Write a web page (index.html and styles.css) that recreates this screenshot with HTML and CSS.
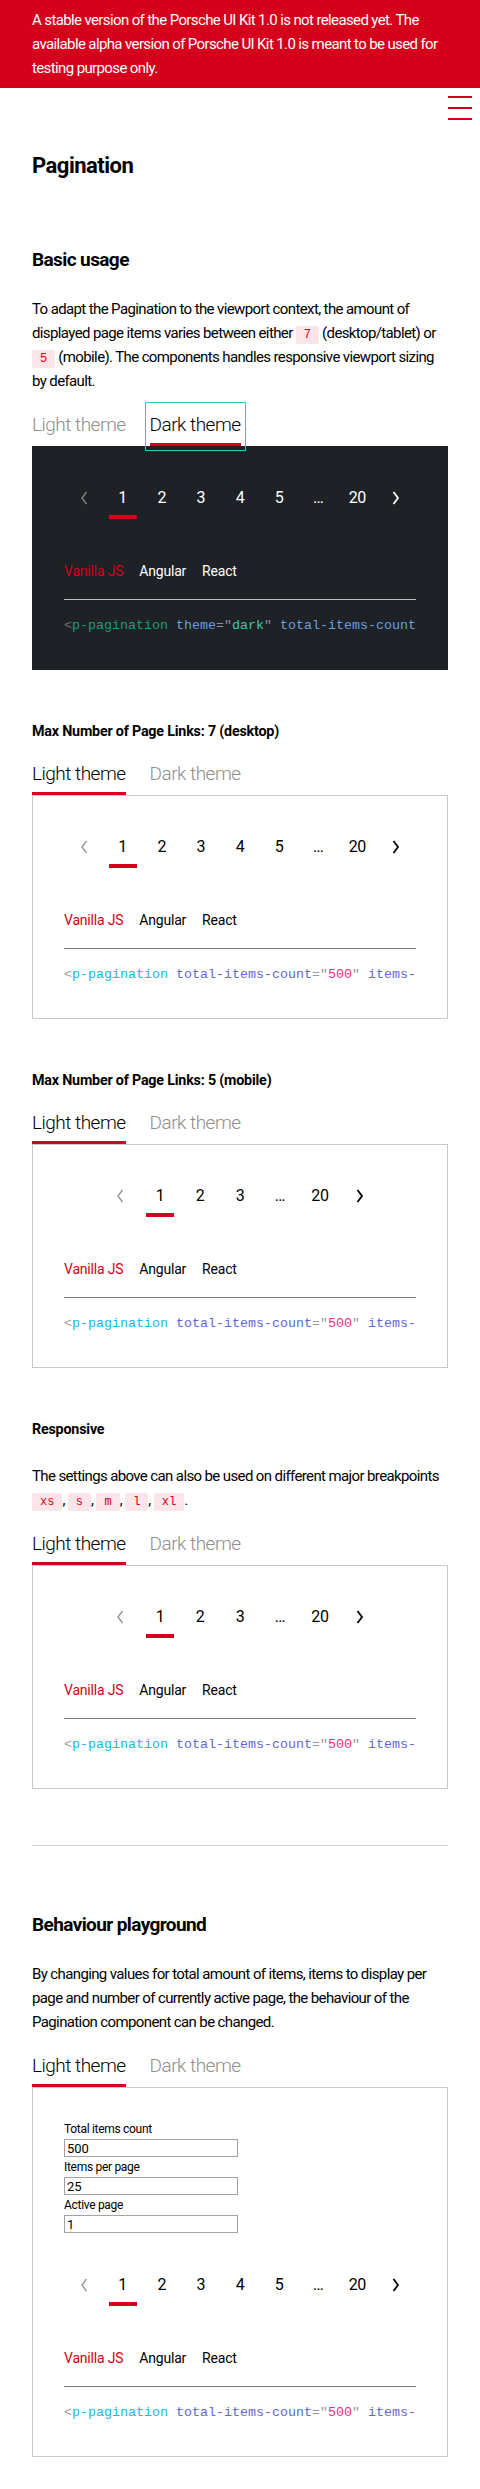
FILE: index.html
```html
<!DOCTYPE html>
<html lang="en">
<head>
<meta charset="utf-8">
<title>Pagination</title>
<link rel="stylesheet" href="styles.css">
</head>
<body>
<div class="banner">A stable version of the Porsche UI Kit 1.0 is not released yet. The available alpha version of Porsche UI Kit 1.0 is meant to be used for testing purpose only.</div>
<header class="topbar">
  <button class="menu" aria-label="Menu">
    <svg width="24" height="24" viewBox="0 0 24 24"><rect x="0" y="0" width="24" height="2"/><rect x="0" y="11" width="24" height="2"/><rect x="0" y="22" width="24" height="2"/></svg>
  </button>
</header>
<main class="content">
  <h1 class="title">Pagination</h1>

  <h2 class="section-title">Basic usage</h2>
  <p class="text">To adapt the Pagination to the viewport context, the amount of displayed page items varies between either <code class="chip">7</code> (desktop/tablet) or <code class="chip">5</code> (mobile). The components handles responsive viewport sizing by default.</p>
  <div class="tabs">
    <button class="tab">Light theme</button>
    <button class="tab active focused">Dark theme</button>
  </div>
  <div class="demo dark">
    <nav class="pagination">
      <span class="page arrow disabled"><svg width="24" height="24" viewBox="0 0 24 24"><path d="M14.5 6 L10 12 L14.5 18" fill="none" stroke="currentColor" stroke-width="1.5"/></svg></span>
      <span class="page active">1</span>
      <span class="page">2</span>
      <span class="page">3</span>
      <span class="page">4</span>
      <span class="page">5</span>
      <span class="page">…</span>
      <span class="page">20</span>
      <span class="page arrow"><svg width="24" height="24" viewBox="0 0 24 24"><path d="M9.5 6 L14 12 L9.5 18" fill="none" stroke="currentColor" stroke-width="1.8"/></svg></span>
    </nav>
    <div class="code-tabs"><span class="code-tab active">Vanilla JS</span><span class="code-tab">Angular</span><span class="code-tab">React</span></div>
    <div class="divider"></div>
    <pre class="code"><span class="c-br">&lt;</span><span class="c-tag">p-pagination</span> <span class="c-attr">theme</span><span class="c-eq">=</span><span class="c-q">"</span><span class="c-val">dark</span><span class="c-q">"</span> <span class="c-attr">total-items-count</span><span class="c-eq">=</span><span class="c-q">"</span><span class="c-val">500</span><span class="c-q">"</span> <span class="c-attr">items-per-page</span><span class="c-eq">=</span><span class="c-q">"</span><span class="c-val">25</span><span class="c-q">"</span> <span class="c-attr">active-page</span><span class="c-eq">=</span><span class="c-q">"</span><span class="c-val">1</span><span class="c-q">"</span><span class="c-br">&gt;&lt;/</span><span class="c-tag">p-pagination</span><span class="c-br">&gt;</span></pre>
  </div>

  <h3 class="sub-title">Max Number of Page Links: 7 (desktop)</h3>
  <div class="tabs">
    <button class="tab active">Light theme</button>
    <button class="tab">Dark theme</button>
  </div>
  <div class="demo">
    <nav class="pagination">
      <span class="page arrow disabled"><svg width="24" height="24" viewBox="0 0 24 24"><path d="M14.5 6 L10 12 L14.5 18" fill="none" stroke="currentColor" stroke-width="1.5"/></svg></span>
      <span class="page active">1</span>
      <span class="page">2</span>
      <span class="page">3</span>
      <span class="page">4</span>
      <span class="page">5</span>
      <span class="page">…</span>
      <span class="page">20</span>
      <span class="page arrow"><svg width="24" height="24" viewBox="0 0 24 24"><path d="M9.5 6 L14 12 L9.5 18" fill="none" stroke="currentColor" stroke-width="1.8"/></svg></span>
    </nav>
    <div class="code-tabs"><span class="code-tab active">Vanilla JS</span><span class="code-tab">Angular</span><span class="code-tab">React</span></div>
    <div class="divider"></div>
    <pre class="code"><span class="c-br">&lt;</span><span class="c-tag">p-pagination</span> <span class="c-attr">total-items-count</span><span class="c-eq">=</span><span class="c-q">"</span><span class="c-val">500</span><span class="c-q">"</span> <span class="c-attr">items-per-page</span><span class="c-eq">=</span><span class="c-q">"</span><span class="c-val">25</span><span class="c-q">"</span> <span class="c-attr">active-page</span><span class="c-eq">=</span><span class="c-q">"</span><span class="c-val">1</span><span class="c-q">"</span> <span class="c-attr">max-number-of-page-links</span><span class="c-eq">=</span><span class="c-q">"</span><span class="c-val">7</span><span class="c-q">"</span><span class="c-br">&gt;&lt;/</span><span class="c-tag">p-pagination</span><span class="c-br">&gt;</span></pre>
  </div>

  <h3 class="sub-title">Max Number of Page Links: 5 (mobile)</h3>
  <div class="tabs">
    <button class="tab active">Light theme</button>
    <button class="tab">Dark theme</button>
  </div>
  <div class="demo">
    <nav class="pagination">
      <span class="page arrow disabled"><svg width="24" height="24" viewBox="0 0 24 24"><path d="M14.5 6 L10 12 L14.5 18" fill="none" stroke="currentColor" stroke-width="1.5"/></svg></span>
      <span class="page active">1</span>
      <span class="page">2</span>
      <span class="page">3</span>
      <span class="page">…</span>
      <span class="page">20</span>
      <span class="page arrow"><svg width="24" height="24" viewBox="0 0 24 24"><path d="M9.5 6 L14 12 L9.5 18" fill="none" stroke="currentColor" stroke-width="1.8"/></svg></span>
    </nav>
    <div class="code-tabs"><span class="code-tab active">Vanilla JS</span><span class="code-tab">Angular</span><span class="code-tab">React</span></div>
    <div class="divider"></div>
    <pre class="code"><span class="c-br">&lt;</span><span class="c-tag">p-pagination</span> <span class="c-attr">total-items-count</span><span class="c-eq">=</span><span class="c-q">"</span><span class="c-val">500</span><span class="c-q">"</span> <span class="c-attr">items-per-page</span><span class="c-eq">=</span><span class="c-q">"</span><span class="c-val">25</span><span class="c-q">"</span> <span class="c-attr">active-page</span><span class="c-eq">=</span><span class="c-q">"</span><span class="c-val">1</span><span class="c-q">"</span> <span class="c-attr">max-number-of-page-links</span><span class="c-eq">=</span><span class="c-q">"</span><span class="c-val">5</span><span class="c-q">"</span><span class="c-br">&gt;&lt;/</span><span class="c-tag">p-pagination</span><span class="c-br">&gt;</span></pre>
  </div>

  <h3 class="sub-title">Responsive</h3>
  <p class="text after-sub">The settings above can also be used on different major breakpoints <code class="chip">xs</code>, <code class="chip">s</code>, <code class="chip">m</code>, <code class="chip">l</code>, <code class="chip">xl</code>.</p>
  <div class="tabs">
    <button class="tab active">Light theme</button>
    <button class="tab">Dark theme</button>
  </div>
  <div class="demo">
    <nav class="pagination">
      <span class="page arrow disabled"><svg width="24" height="24" viewBox="0 0 24 24"><path d="M14.5 6 L10 12 L14.5 18" fill="none" stroke="currentColor" stroke-width="1.5"/></svg></span>
      <span class="page active">1</span>
      <span class="page">2</span>
      <span class="page">3</span>
      <span class="page">…</span>
      <span class="page">20</span>
      <span class="page arrow"><svg width="24" height="24" viewBox="0 0 24 24"><path d="M9.5 6 L14 12 L9.5 18" fill="none" stroke="currentColor" stroke-width="1.8"/></svg></span>
    </nav>
    <div class="code-tabs"><span class="code-tab active">Vanilla JS</span><span class="code-tab">Angular</span><span class="code-tab">React</span></div>
    <div class="divider"></div>
    <pre class="code"><span class="c-br">&lt;</span><span class="c-tag">p-pagination</span> <span class="c-attr">total-items-count</span><span class="c-eq">=</span><span class="c-q">"</span><span class="c-val">500</span><span class="c-q">"</span> <span class="c-attr">items-per-page</span><span class="c-eq">=</span><span class="c-q">"</span><span class="c-val">25</span><span class="c-q">"</span> <span class="c-attr">active-page</span><span class="c-eq">=</span><span class="c-q">"</span><span class="c-val">1</span><span class="c-q">"</span><span class="c-br">&gt;&lt;/</span><span class="c-tag">p-pagination</span><span class="c-br">&gt;</span></pre>
  </div>

  <hr class="rule">

  <h2 class="section-title playground">Behaviour playground</h2>
  <p class="text">By changing values for total amount of items, items to display per page and number of currently active page, the behaviour of the Pagination component can be changed.</p>
  <div class="tabs">
    <button class="tab active">Light theme</button>
    <button class="tab">Dark theme</button>
  </div>
  <div class="demo">
    <form class="controls">
      <label class="field"><span class="field-label">Total items count</span><input class="field-input" type="number" value="500"></label>
      <label class="field"><span class="field-label">Items per page</span><input class="field-input" type="number" value="25"></label>
      <label class="field"><span class="field-label">Active page</span><input class="field-input" type="number" value="1"></label>
    </form>
    <nav class="pagination">
      <span class="page arrow disabled"><svg width="24" height="24" viewBox="0 0 24 24"><path d="M14.5 6 L10 12 L14.5 18" fill="none" stroke="currentColor" stroke-width="1.5"/></svg></span>
      <span class="page active">1</span>
      <span class="page">2</span>
      <span class="page">3</span>
      <span class="page">4</span>
      <span class="page">5</span>
      <span class="page">…</span>
      <span class="page">20</span>
      <span class="page arrow"><svg width="24" height="24" viewBox="0 0 24 24"><path d="M9.5 6 L14 12 L9.5 18" fill="none" stroke="currentColor" stroke-width="1.8"/></svg></span>
    </nav>
    <div class="code-tabs"><span class="code-tab active">Vanilla JS</span><span class="code-tab">Angular</span><span class="code-tab">React</span></div>
    <div class="divider"></div>
    <pre class="code"><span class="c-br">&lt;</span><span class="c-tag">p-pagination</span> <span class="c-attr">total-items-count</span><span class="c-eq">=</span><span class="c-q">"</span><span class="c-val">500</span><span class="c-q">"</span> <span class="c-attr">items-per-page</span><span class="c-eq">=</span><span class="c-q">"</span><span class="c-val">25</span><span class="c-q">"</span> <span class="c-attr">active-page</span><span class="c-eq">=</span><span class="c-q">"</span><span class="c-val">1</span><span class="c-q">"</span><span class="c-br">&gt;&lt;/</span><span class="c-tag">p-pagination</span><span class="c-br">&gt;</span></pre>
  </div>
</main>
</body>
</html>
```

FILE: styles.css
```css
* { box-sizing: border-box; }

html, body { margin: 0; padding: 0; }

body {
  font-family: Roboto, "Liberation Sans", sans-serif;
  color: #000;
  background: #fff;
}

.banner {
  background: #d5001c;
  color: #fff;
  font-size: 15px;
  letter-spacing: -0.62px;
  line-height: 24px;
  padding: 8px 32px;
  height: 88px;
}

.topbar {
  display: flex;
  justify-content: flex-end;
  height: 32px;
  padding: 8px 8px 0 0;
}

.menu {
  width: 24px;
  height: 24px;
  padding: 0;
  border: 0;
  background: none;
  color: #d5001c;
  fill: #d5001c;
  display: block;
}
.menu svg { display: block; }

.content {
  padding: 0 32px 32px;
}

.title {
  margin: 30px 0 0;
  font-size: 22px;
  font-weight: 700;
  letter-spacing: -0.5px;
  line-height: 32px;
}

.section-title {
  margin: 64px 0 0;
  font-size: 19px;
  font-weight: 700;
  letter-spacing: -0.6px;
  line-height: 28px;
}
.section-title.playground { margin-top: 65px; }

.sub-title {
  margin: 51px 0 0;
  font-size: 14.3px;
  font-weight: 700;
  letter-spacing: -0.2px;
  line-height: 21px;
}

.text {
  margin: 23px 0 0;
  font-size: 15px;
  letter-spacing: -0.62px;
  line-height: 24px;
}
.text.after-sub { margin-top: 24px; }

.chip {
  display: inline-block;
  font-family: "Liberation Mono", monospace;
  font-size: 12px;
  line-height: 18px;
  letter-spacing: 0;
  padding: 0 8px;
  background: #fbe5e8;
  color: #d5001c;
  border-radius: 2px;
}

.tabs {
  display: flex;
  gap: 24px;
  margin-top: 14px;
}

.tab {
  background: none;
  border: 0;
  border-bottom: 3px solid transparent;
  padding: 4px 0;
  margin: 0;
  font-family: inherit;
  font-size: 19px;
  font-weight: 300;
  letter-spacing: -0.5px;
  line-height: 28px;
  color: #8e8e8e;
  cursor: pointer;
}
.tab.active {
  color: #000;
  border-bottom-color: #d5001c;
}
.tab.focused {
  outline: 1px solid #1fd0c2;
  outline-offset: 4px;
}

.demo {
  border: 1px solid #c9c9c9;
  padding: 31px 31px 33px;
  background: #fff;
  color: #000;
}
.demo.dark {
  background: #1e2125;
  border-color: #1e2125;
  color: #fff;
}

.pagination {
  display: flex;
  justify-content: center;
  height: 40px;
}

.page {
  position: relative;
  width: 40px;
  height: 40px;
  line-height: 40px;
  text-align: center;
  font-size: 16px;
  letter-spacing: -0.3px;
}
.page.active::after {
  content: "";
  position: absolute;
  left: 6px;
  top: 37px;
  width: 28px;
  height: 4px;
  background: #d5001c;
}
.page.arrow {
  display: flex;
  align-items: center;
  justify-content: center;
}
.page.arrow svg { display: block; }
.page.disabled { color: #9a9a9a; }
.dark .page.disabled { color: #7d8084; }

.controls {
  margin: 0 0 32px;
}
.field { display: block; }
.field-label {
  display: block;
  font-size: 12px;
  letter-spacing: -0.3px;
  line-height: 20px;
}
.field-input {
  display: block;
  width: 174px;
  height: 18px;
  margin: 0;
  padding: 0 2px;
  border: 1px solid #a3a3a3;
  border-radius: 0;
  font-family: Roboto, "Liberation Sans", sans-serif;
  font-size: 13px;
  color: #000;
  background: #fff;
  -moz-appearance: textfield;
}
.field-input::-webkit-inner-spin-button,
.field-input::-webkit-outer-spin-button { -webkit-appearance: none; margin: 0; }

.code-tabs {
  display: flex;
  gap: 16px;
  margin-top: 43px;
  font-size: 14px;
  letter-spacing: -0.2px;
  line-height: 20px;
}
.code-tab.active { color: #d5001c; }

.divider {
  height: 1px;
  margin-top: 18px;
  background: #7a7a7a;
}
.dark .divider { background: #bdbdbd; }

.code {
  margin: 16px 0 0;
  font-family: "Liberation Mono", monospace;
  font-size: 13.33px;
  line-height: 20px;
  white-space: pre;
  overflow: hidden;
}

.c-br, .c-eq, .c-q { color: #9a9a9a; }
.c-tag { color: #1ab6ee; }
.c-attr { color: #5a6bd6; }
.c-val { color: #ea2b8d; }

.dark .c-br { color: #6e7378; }
.dark .c-eq, .dark .c-q { color: #8d9297; }
.dark .c-tag { color: #1a9f6f; }
.dark .c-attr { color: #6c9fd6; }
.dark .c-val { color: #40cc9a; }

.rule {
  margin: 56px 0 0;
  border: 0;
  height: 1px;
  background: #cfcfcf;
}
```
